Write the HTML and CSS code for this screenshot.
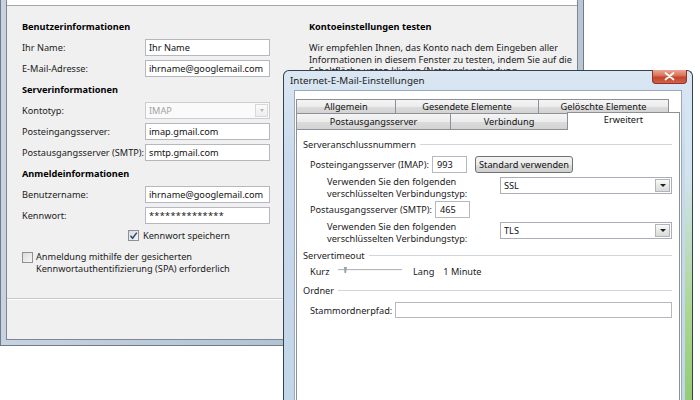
FILE: index.html
```html
<!DOCTYPE html>
<html lang="de">
<head>
    <meta charset="UTF-8">
    <meta name="viewport" content="width=device-width, initial-scale=1.0">
    <title>Konto hinzufügen | Internet-E-Mail-Einstellungen</title>
    <link rel="stylesheet" href="styles.css">
</head>
<body>
<div class="desk">

    <!-- Fenster im Hintergrund -->
    <div class="win konto">
        <div class="konto-inner">
            <div class="konto-head"></div>
            <div class="konto-body">
                <div class="form">
                    <h3>Benutzerinformationen</h3>
                    <label>Ihr Name:</label>
                    <div class="field">Ihr Name</div>
                    <label>E-Mail-Adresse:</label>
                    <div class="field">ihrname@googlemail.com</div>

                    <h3>Serverinformationen</h3>
                    <label>Kontotyp:</label>
                    <div class="field combo"><span>IMAP</span><i class="drop"></i></div>
                    <label>Posteingangsserver:</label>
                    <div class="field">imap.gmail.com</div>
                    <label>Postausgangsserver (SMTP):</label>
                    <div class="field">smtp.gmail.com</div>

                    <h3>Anmeldeinformationen</h3>
                    <label>Benutzername:</label>
                    <div class="field">ihrname@googlemail.com</div>
                    <label>Kennwort:</label>
                    <div class="field pw">**************</div>

                    <div class="check save">
                        <span class="box">
                            <svg width="9" height="9" viewBox="0 0 9 9"><path d="M1.5 4.8 L3.6 7.2 L7.8 1.6" fill="none" stroke="#2b4a78" stroke-width="1.5"/></svg>
                        </span>
                        Kennwort speichern
                    </div>
                    <div class="check spa">
                        <span class="box"></span>
                        <span>Anmeldung mithilfe der gesicherten<br>Kennwortauthentifizierung (SPA) erforderlich</span>
                    </div>
                </div>

                <div class="test">
                    <h3>Kontoeinstellungen testen</h3>
                    <p>Wir empfehlen Ihnen, das Konto nach dem Eingeben aller<br>Informationen in diesem Fenster zu testen, indem Sie auf die<br>Schaltfläche unten klicken (Netzwerkverbindung</p>
                </div>
            </div>
            <div class="konto-foot"></div>
        </div>
    </div>

    <!-- Dialog im Vordergrund -->
    <div class="win dlg">
        <div class="dlg-title">
            <span class="caption">Internet-E-Mail-Einstellungen</span>
            <div class="winclose">
                <svg width="33" height="13" viewBox="0 0 33 13">
                    <path d="M12.5 3 L20.5 9.5 M20.5 3 L12.5 9.5" stroke="#ffffff" stroke-width="1.7" stroke-linecap="round"/>
                </svg>
            </div>
        </div>

        <div class="dlg-client">
            <div class="tabs">
                <div class="tabrow back">
                    <span class="tab t-allg">Allgemein</span>
                    <span class="tab t-gesendet">Gesendete Elemente</span>
                    <span class="tab t-geloescht">Gelöschte Elemente</span>
                </div>
                <div class="tabrow front">
                    <span class="tab t-postaus">Postausgangsserver</span>
                    <span class="tab t-verb">Verbindung</span>
                    <span class="tab t-erw sel">Erweitert</span>
                </div>
            </div>

            <div class="panel">
                <div class="grp g-first">Serveranschlussnummern</div>

                <div class="row r-imap">
                    <span class="lbl-imap">Posteingangsserver (IMAP):</span>
                    <div class="field port">993</div>
                    <div class="btn">Standard verwenden</div>
                </div>
                <div class="row r-enc">
                    <span class="enc-text">Verwenden Sie den folgenden<br>verschlüsselten Verbindungstyp:</span>
                    <div class="select"><span>SSL</span><i class="dd"></i></div>
                </div>

                <div class="row r-smtp">
                    <span class="lbl-smtp">Postausgangsserver (SMTP):</span>
                    <div class="field port">465</div>
                </div>
                <div class="row r-enc">
                    <span class="enc-text">Verwenden Sie den folgenden<br>verschlüsselten Verbindungstyp:</span>
                    <div class="select"><span>TLS</span><i class="dd"></i></div>
                </div>

                <div class="grp">Servertimeout</div>
                <div class="row r-kurz">
                    <span class="lbl-kurz">Kurz</span>
                    <svg class="slider" width="64" height="10" viewBox="0 0 64 10">
                        <line x1="0" y1="3.5" x2="64" y2="3.5" stroke="#b4b8bd" stroke-width="1"/>
                        <line x1="0" y1="4.5" x2="64" y2="4.5" stroke="#f4f4f4" stroke-width="1"/>
                        <path d="M6 1 L9 1 L8 7 L6.5 7 Z" fill="#9aa1a8"/>
                    </svg>
                    <span class="lang">Lang</span>
                    <span class="minute">1 Minute</span>
                </div>

                <div class="grp">Ordner</div>
                <div class="row r-stamm">
                    <span class="lbl-stamm">Stammordnerpfad:</span>
                    <div class="field path"></div>
                </div>
            </div>
        </div>
    </div>

</div>
</body>
</html>
```

FILE: styles.css
```css
body {
    margin: 0;
    padding: 0;
    font-family: "Noto Sans", "Liberation Sans", sans-serif;
    font-size: 9.2px;
    color: #1b1b1b;
    background-color: #ffffff;
}

.desk {
    position: relative;
    width: 700px;
    height: 400px;
    overflow: hidden;
}

.win {
    position: absolute;
    box-sizing: border-box;
}

/* ---------- Fenster: Konto hinzufügen ---------- */

.konto {
    left: 0;
    top: 0;
    width: 584px;
    height: 346px;
    padding: 0 5px 5px 5px;
    border: 1px solid #707b87;
    border-top: none;
    background: linear-gradient(to right, #c7d3df, #a9bccf 70%, #b9c7d5);
}

.konto-inner {
    height: 100%;
    box-sizing: border-box;
    display: flex;
    flex-direction: column;
    background-color: #f0f0f0;
    border: 1px solid #7d8894;
    border-top: none;
}

.konto-head {
    height: 5px;
    background-color: #ffffff;
    border-bottom: 1px solid #a7a7a7;
}

.konto-body {
    height: 292px;
    box-sizing: border-box;
    display: flex;
    padding: 10px 0 0 15px;
}

.konto-foot {
    flex: 1;
    border-top: 1px solid #c8c8c8;
    box-shadow: inset 0 1px 0 #ffffff;
}

h3 {
    margin: 0;
    font-size: 9.2px;
    font-weight: bold;
    color: #000000;
}

.form {
    width: 287px;
    display: grid;
    grid-template-columns: 123px 125px;
    grid-auto-rows: minmax(21px, auto);
    align-items: center;
    align-content: start;
}

.form h3 {
    grid-column: 1 / -1;
}

.form label {
    white-space: nowrap;
}

.field {
    height: 17px;
    box-sizing: border-box;
    padding: 0 3px;
    line-height: 15px;
    white-space: nowrap;
    overflow: hidden;
    background-color: #ffffff;
    border: 1px solid #b5b8be;
    color: #111111;
}

.pw {
    letter-spacing: 0.3px;
}

.combo {
    display: flex;
    justify-content: space-between;
    align-items: center;
    padding-right: 1px;
    color: #a3a3a3;
    background-color: #fafafa;
    border-color: #cbcdd0;
}

.drop {
    width: 13px;
    height: 13px;
    box-sizing: border-box;
    border: 1px solid #d8d8d8;
    background: linear-gradient(#fbfbfb, #ededed);
    display: flex;
    align-items: center;
    justify-content: center;
}

.drop::after {
    content: "";
    border-left: 2.5px solid transparent;
    border-right: 2.5px solid transparent;
    border-top: 3px solid #b8b8b8;
}

.check {
    grid-column: 1 / -1;
    display: flex;
    gap: 4px;
}

.save {
    align-self: start;
    align-items: center;
    margin-top: 3px;
    padding-left: 106px;
}

.spa {
    align-items: flex-start;
    margin-top: 4px;
    line-height: 11.5px;
    gap: 3px;
}

.box {
    width: 11px;
    height: 11px;
    box-sizing: border-box;
    border: 1px solid #8f9092;
    background: linear-gradient(135deg, #d9dbde, #f7f7f7);
    display: flex;
    align-items: center;
    justify-content: center;
    flex: none;
}

.spa .box {
    margin-top: 1px;
}

.test p {
    margin: 5px 0 0;
    line-height: 11.5px;
    white-space: nowrap;
}

.test h3 {
    line-height: 21px;
}

/* ---------- Dialog: Internet-E-Mail-Einstellungen ---------- */

.dlg {
    left: 283px;
    top: 70px;
    width: 410px;
    height: 345px;
    padding: 0 10px;
    border: 1px solid #34414f;
    border-bottom: none;
    border-radius: 6px 6px 0 0;
    background:
        linear-gradient(to bottom, #d8e6f3 0, #d2e3ef 30%, #a9d68c 72%, #8fca70 100%) right top / 7px 100% no-repeat,
        linear-gradient(to bottom, #dbe7f3, #c8daec 25%, #c2d6ea);
}

.dlg-title {
    position: relative;
    height: 19px;
    margin: 0 -5px 0 -4px;
}

.caption {
    font-size: 9.8px;
    line-height: 19px;
    color: #222222;
}

/* Schließen-Knopf liegt über der Titelleiste */
.winclose {
    position: absolute;
    top: -1px;
    right: 0;
    width: 35px;
    height: 14px;
    box-sizing: border-box;
    border: 1px solid #8e3528;
    border-top: none;
    border-radius: 0 0 4px 4px;
    background-color: #cf5a44;
    background-image: linear-gradient(#eaa696, #d86f58 45%, #c4432b 55%, #d0634a);
    line-height: 0;
}

.dlg-client {
    height: 100%;
    box-sizing: border-box;
    padding: 8px 1px 0 1px;
    background-color: #ffffff;
    border: 1px solid #9aaabb;
    border-bottom: none;
}

.tabrow {
    display: flex;
}

.back {
    height: 14px;
}

.front {
    height: 16px;
}

.tab {
    box-sizing: border-box;
    margin-right: -1px;
    display: flex;
    align-items: center;
    justify-content: center;
    color: #111111;
    border: 1px solid #8d9196;
    border-bottom: none;
    background: linear-gradient(#f5f5f5, #ececec 50%, #dcdcdc 51%, #d3d3d3);
}

.t-allg { width: 100px; }
.t-gesendet { width: 144px; }
.t-geloescht { width: 131px; }
.t-postaus { width: 155px; }
.t-verb { width: 118px; }
.t-erw { width: 113px; }

.tab.sel {
    position: relative;
    z-index: 1;
    align-self: flex-end;
    height: 18px;
    margin-bottom: -1px;
    padding-bottom: 5px;
    background: #ffffff;
}

.panel {
    height: 300px;
    box-sizing: border-box;
    padding: 0 7px 0 6px;
    background-color: #ffffff;
    border: 1px solid #8d9196;
}

.grp {
    height: 14px;
    margin-top: 4px;
    display: flex;
    align-items: center;
    gap: 4px;
    white-space: nowrap;
}

.grp::after {
    content: "";
    flex: 1;
    border-top: 1px solid #d0d6dc;
}

.g-first {
    margin-top: 7px;
}

.row {
    display: flex;
    align-items: center;
    padding-left: 7px;
    white-space: nowrap;
}

.r-imap {
    height: 18px;
    margin-top: 4px;
}

.lbl-imap {
    width: 122px;
}

.port {
    width: 35px;
    padding-left: 4px;
}

.btn {
    width: 98px;
    height: 17px;
    margin-left: 8px;
    box-sizing: border-box;
    display: flex;
    align-items: center;
    justify-content: center;
    color: #111111;
    border: 1px solid #707070;
    border-radius: 3px;
    background: linear-gradient(#f3f3f3, #ebebeb 50%, #dddddd 51%, #cfcfcf);
}

.r-enc {
    height: 23px;
    margin-top: 3px;
    align-items: flex-start;
    padding-left: 24px;
}

.enc-text {
    width: 173px;
    line-height: 11.5px;
}

.select {
    width: 172px;
    height: 17px;
    margin-top: 1px;
    box-sizing: border-box;
    padding-left: 3px;
    display: flex;
    justify-content: space-between;
    align-items: center;
    border: 1px solid #a9afb8;
    color: #111111;
}

.dd {
    width: 15px;
    height: 13px;
    margin-right: 1px;
    box-sizing: border-box;
    border: 1px solid #b1b4b8;
    background: linear-gradient(#fbfbfb, #e8e8e8 50%, #dadada);
    display: flex;
    align-items: center;
    justify-content: center;
}

.dd::after {
    content: "";
    border-left: 3px solid transparent;
    border-right: 3px solid transparent;
    border-top: 3px solid #202020;
}

.r-smtp {
    height: 17px;
    margin-top: 2px;
}

.lbl-smtp {
    width: 125px;
}

.r-kurz {
    height: 15px;
    margin-top: 2px;
}

.lbl-kurz {
    width: 28px;
}

.slider {
    margin-top: -2px;
}

.lang {
    margin-left: 11px;
}

.minute {
    margin-left: 9px;
}

.r-stamm {
    height: 16px;
    margin-top: 5px;
}

.lbl-stamm {
    width: 85px;
}

.path {
    flex: 1;
    height: 16px;
}
```
